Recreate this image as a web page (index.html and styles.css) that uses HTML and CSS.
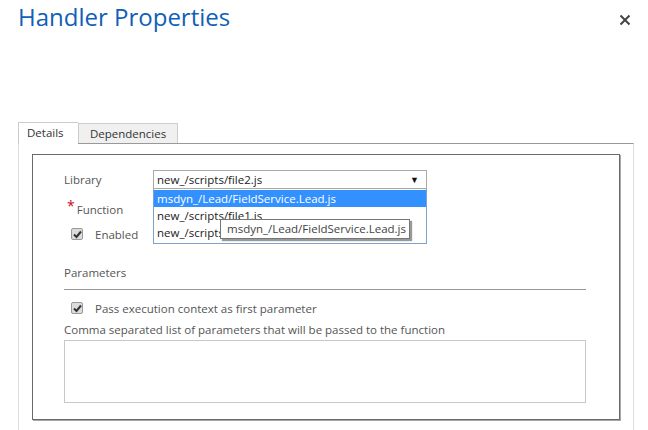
FILE: index.html
```html
<!DOCTYPE html>
<html>
<head>
<meta charset="utf-8">
<link rel="stylesheet" href="styles.css">
</head>
<body>
<div class="header">
  <h1 class="title">Handler Properties</h1>
  <button class="close" aria-label="Close">
    <svg width="12" height="12" viewBox="0 0 12 12"><path d="M1.5 1.5 L10.5 10.5 M10.5 1.5 L1.5 10.5" stroke="#444" stroke-width="2" fill="none"/></svg>
  </button>
</div>
<div class="tabs">
  <div class="tab active">Details</div>
  <div class="tab">Dependencies</div>
</div>
<div class="panel">
  <div class="box">
    <div class="row row-lib">
      <div class="label">Library</div>
      <div class="select-wrap">
        <div class="select"><span>new_/scripts/file2.js</span><span class="arrow">&#9660;</span></div>
        <div class="dropdown">
          <div class="opt sel">msdyn_/Lead/FieldService.Lead.js</div>
          <div class="opt">new_/scripts/file1.js</div>
          <div class="opt">new_/scripts/file2.js</div>
        </div>
        <div class="tooltip">msdyn_/Lead/FieldService.Lead.js</div>
      </div>
    </div>
    <div class="row row-fn">
      <div class="label"><span class="req">*</span>Function</div>
    </div>
    <div class="row row-en">
      <span class="cb"><svg width="9" height="9" viewBox="0 0 9 9"><path d="M1 4.5 L3.5 7 L8 1.5" stroke="#333" stroke-width="2" fill="none"/></svg></span>
      <span class="cb-label">Enabled</span>
    </div>
    <div class="params-head">Parameters</div>
    <div class="row row-pass">
      <span class="cb"><svg width="9" height="9" viewBox="0 0 9 9"><path d="M1 4.5 L3.5 7 L8 1.5" stroke="#333" stroke-width="2" fill="none"/></svg></span>
      <span class="cb-label">Pass execution context as first parameter</span>
    </div>
    <div class="comma">Comma separated list of parameters that will be passed to the function</div>
    <div class="textarea"></div>
  </div>
</div>
</body>
</html>
```
FILE: styles.css
```css
* { box-sizing: border-box; }
html, body { margin: 0; padding: 0; background: #fff; }
body {
  font-family: "Open Sans", "Noto Sans", sans-serif;
  font-size: 11.5px;
  color: #444;
  width: 648px;
  height: 430px;
  overflow: hidden;
}
.header {
  display: flex;
  justify-content: space-between;
  align-items: flex-start;
  height: 122px;
}
.title {
  margin: 0;
  padding: 0 0 0 18px;
  font-weight: normal;
  font-size: 24px;
  line-height: 34px;
  color: #1160b7;
}
.close {
  margin: 14px 17px 0 0;
  padding: 0;
  border: none;
  background: none;
  width: 12px;
  height: 12px;
  display: block;
}
.close svg { display: block; }
.tabs {
  display: flex;
  margin-left: 18px;
  height: 21px;
  position: relative;
  z-index: 1;
}
.tab {
  height: 20px;
  margin-top: 1px;
  border: 1px solid #ccc;
  border-bottom: none;
  background: #f0f0f0;
  line-height: 19px;
  padding: 0 10px;
  color: #333;
}
.tab.active {
  height: 22px;
  margin-top: 0;
  background: #fff;
  width: 60px;
  padding: 0 0 0 8px;
  border-right: none;
}
.tab:not(.active) { width: 100px; text-align: center; padding: 0; }
.panel {
  margin: 0 14px 0 18px;
  border-top: 1px solid #999;
  border-left: 1px solid #ddd;
  border-right: 1px solid #ddd;
  padding: 10px 13px 0 13px;
  height: 300px;
}
.box {
  border: 1px solid #6a6a6a;
  box-shadow: 1px 1px 0 #a8a8a8;
  height: 266px;
  padding: 15px 33px 0 31px;
}
.row { display: flex; align-items: center; }
.label { width: 89px; line-height: 19px; color: #555; }
.row-lib { height: 19px; }
.select-wrap { position: relative; width: 274px; height: 19px; }
.select {
  height: 19px;
  border: 1px solid #aaa;
  display: flex;
  justify-content: space-between;
  align-items: center;
  padding: 0 7px 0 3px;
  color: #222;
  line-height: 17px;
}
.arrow { font-size: 9px; color: #111; }
.dropdown {
  position: absolute;
  left: 0;
  top: 19px;
  width: 274px;
  height: 55px;
  border: 1px solid #7da2ce;
  border-top: none;
  background: #fff;
  z-index: 2;
}
.opt { height: 17px; line-height: 17px; padding-left: 3px; color: #222; }
.opt.sel { background: #3391ff; color: #fff; margin-top: 1px; }
.tooltip {
  position: absolute;
  left: 67px;
  top: 49px;
  width: 190px;
  height: 20px;
  border: 1px solid #767676;
  background: #fff;
  box-shadow: 2px 2px 1px #999;
  line-height: 18px;
  padding-left: 6px;
  color: #444;
  z-index: 3;
  white-space: nowrap;
}
.row-fn { height: 19px; margin-top: 10px; }
.req { color: #d0021b; font-size: 14px; position: relative; top: -3px; margin: 0 2px 0 3px; }
.row-en { height: 14px; margin-top: 9px; }
.cb {
  width: 12px;
  height: 12px;
  margin-left: 7px;
  border: 1px solid #999;
  background: #dcdcdc;
  border-radius: 2px;
  display: flex;
  align-items: center;
  justify-content: center;
}
.cb svg { display: block; }
.cb-label { margin-left: 12px; color: #555; }
.params-head {
  margin-top: 24px;
  line-height: 16px;
  padding-bottom: 8px;
  border-bottom: 1px solid #999;
  color: #555;
}
.row-pass { height: 16px; margin-top: 10px; }
.comma { margin-top: 6px; line-height: 16px; color: #555; }
.textarea {
  margin-top: 2px;
  height: 63px;
  border: 1px solid #c8c8c8;
}
```
